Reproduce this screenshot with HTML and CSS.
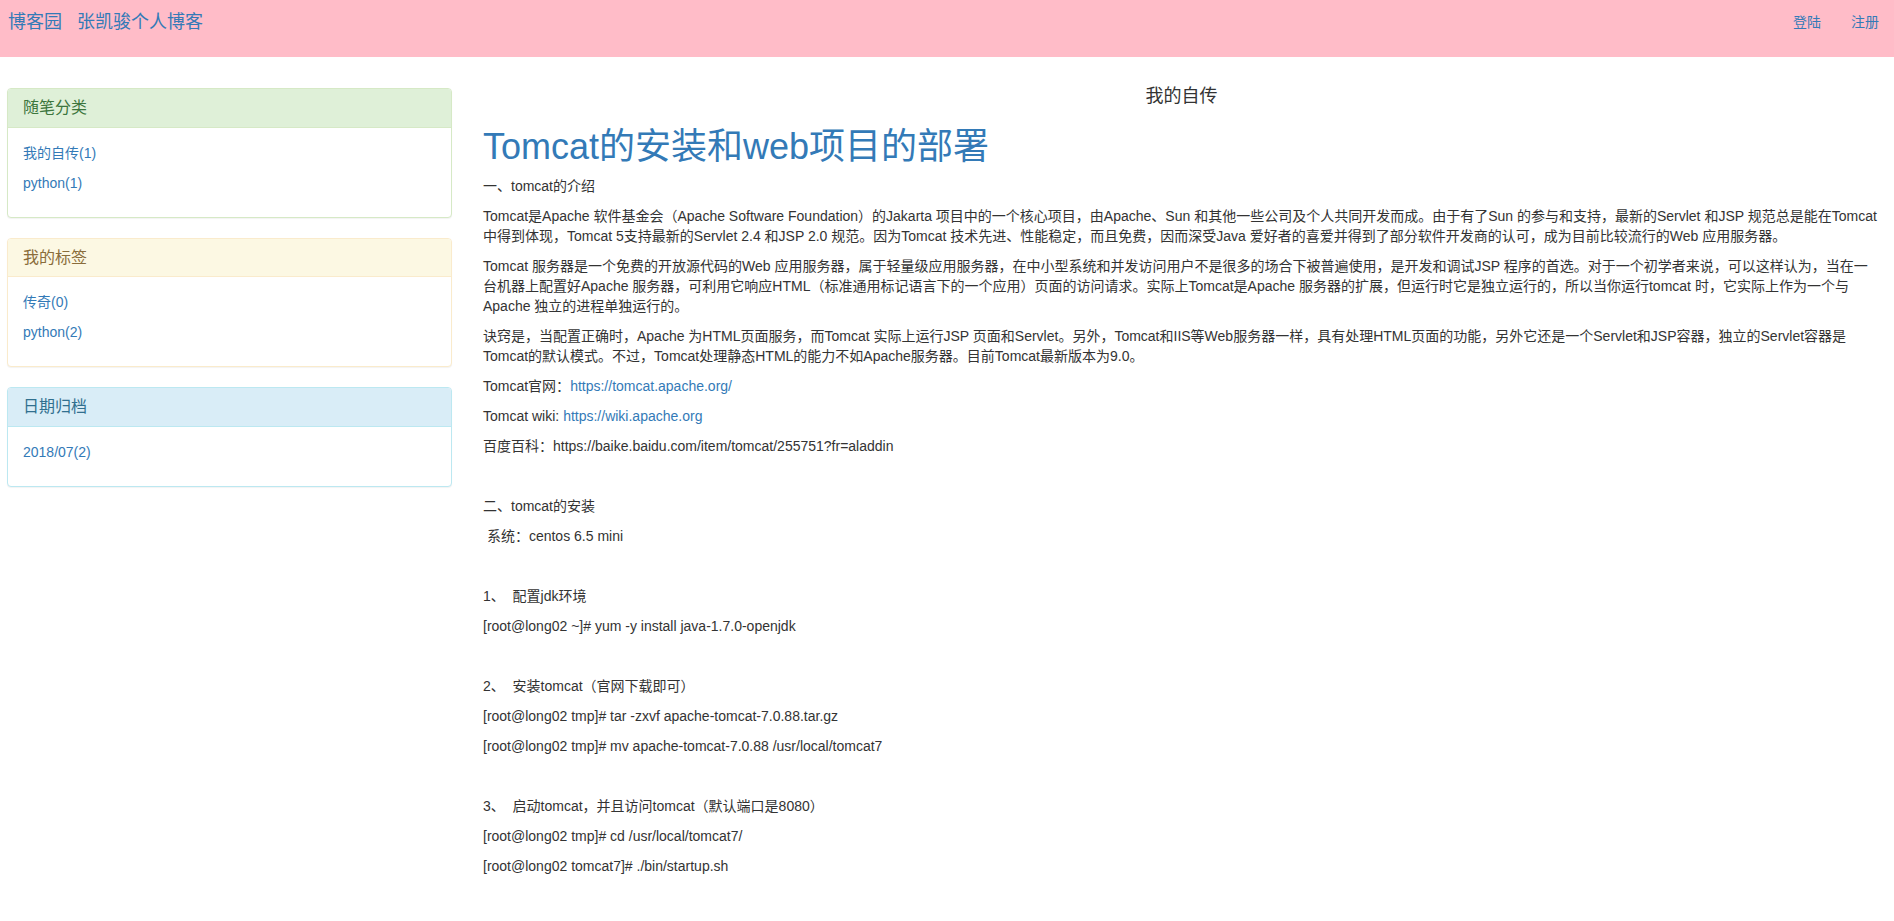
FILE: index.html
```html
<!DOCTYPE html>
<html lang="zh-CN">
<head>
<meta charset="utf-8">
<title>张凯骏个人博客</title>
<link rel="stylesheet" href="styles.css">
</head>
<body>
<nav class="navbar">
  <div class="brand-group">
    <a class="brand" href="#">博客园</a>
    <a class="brand" href="#">张凯骏个人博客</a>
  </div>
  <div class="nav-right">
    <a class="nav-link" href="#">登陆</a>
    <a class="nav-link" href="#">注册</a>
  </div>
</nav>
<div class="layout">
  <aside class="sidebar">
    <div class="panel panel-success">
      <div class="panel-heading">随笔分类</div>
      <div class="panel-body">
        <p><a href="#">我的自传(1)</a></p>
        <p><a href="#">python(1)</a></p>
      </div>
    </div>
    <div class="panel panel-warning">
      <div class="panel-heading">我的标签</div>
      <div class="panel-body">
        <p><a href="#">传奇(0)</a></p>
        <p><a href="#">python(2)</a></p>
      </div>
    </div>
    <div class="panel panel-info">
      <div class="panel-heading">日期归档</div>
      <div class="panel-body">
        <p><a href="#">2018/07(2)</a></p>
      </div>
    </div>
  </aside>
  <main class="content">
    <h4 class="category">我的自传</h4>
    <h1 class="post-title"><a href="#">Tomcat的安装和web项目的部署</a></h1>
    <div class="post-body">
      <p>一、tomcat的介绍</p>
      <p>Tomcat是Apache 软件基金会（Apache Software Foundation）的Jakarta 项目中的一个核心项目，由Apache、Sun 和其他一些公司及个人共同开发而成。由于有了Sun 的参与和支持，最新的Servlet 和JSP 规范总是能在Tomcat中得到体现，Tomcat 5支持最新的Servlet 2.4 和JSP 2.0 规范。因为Tomcat 技术先进、性能稳定，而且免费，因而深受Java 爱好者的喜爱并得到了部分软件开发商的认可，成为目前比较流行的Web 应用服务器。</p>
      <p>Tomcat 服务器是一个免费的开放源代码的Web 应用服务器，属于轻量级应用服务器，在中小型系统和并发访问用户不是很多的场合下被普遍使用，是开发和调试JSP 程序的首选。对于一个初学者来说，可以这样认为，当在一台机器上配置好Apache 服务器，可利用它响应HTML（标准通用标记语言下的一个应用）页面的访问请求。实际上Tomcat是Apache 服务器的扩展，但运行时它是独立运行的，所以当你运行tomcat 时，它实际上作为一个与Apache 独立的进程单独运行的。</p>
      <p>诀窍是，当配置正确时，Apache 为HTML页面服务，而Tomcat 实际上运行JSP 页面和Servlet。另外，Tomcat和IIS等Web服务器一样，具有处理HTML页面的功能，另外它还是一个Servlet和JSP容器，独立的Servlet容器是Tomcat的默认模式。不过，Tomcat处理静态HTML的能力不如Apache服务器。目前Tomcat最新版本为9.0。</p>
      <p>Tomcat官网：<a href="#">https://tomcat.apache.org/</a></p>
      <p>Tomcat wiki: <a href="#">https://wiki.apache.org</a></p>
      <p>百度百科：https://baike.baidu.com/item/tomcat/255751?fr=aladdin</p>
      <p>&nbsp;</p>
      <p>二、tomcat的安装</p>
      <p>&nbsp;系统：centos 6.5 mini</p>
      <p>&nbsp;</p>
      <p>1、&nbsp; 配置jdk环境</p>
      <p>[root@long02 ~]# yum -y install java-1.7.0-openjdk</p>
      <p>&nbsp;</p>
      <p>2、&nbsp; 安装tomcat（官网下载即可）</p>
      <p>[root@long02 tmp]# tar -zxvf apache-tomcat-7.0.88.tar.gz</p>
      <p>[root@long02 tmp]# mv apache-tomcat-7.0.88 /usr/local/tomcat7</p>
      <p>&nbsp;</p>
      <p>3、&nbsp; 启动tomcat，并且访问tomcat（默认端口是8080）</p>
      <p>[root@long02 tmp]# cd /usr/local/tomcat7/</p>
      <p>[root@long02 tomcat7]# ./bin/startup.sh</p>
    </div>
  </main>
</div>
</body>
</html>
```

FILE: styles.css
```css
* {
  box-sizing: border-box;
}

html, body {
  margin: 0;
  padding: 0;
}

body {
  font-family: "Liberation Sans", Arial, "Noto Sans CJK SC", sans-serif;
  font-size: 14px;
  line-height: 20px;
  color: #333333;
  background: #ffffff;
}

a {
  color: #337ab7;
  text-decoration: none;
}

p {
  margin: 0 0 10px;
}

/* Navbar */
.navbar {
  height: 57px;
  background: #ffbcc8;
  display: flex;
  justify-content: space-between;
  align-items: flex-start;
  padding-top: 12px;
}

.brand-group {
  display: flex;
  padding-left: 8px;
  gap: 15px;
}

.brand {
  font-size: 18px;
  line-height: 20px;
}

.nav-right {
  display: flex;
}

.nav-link {
  padding: 0 15px;
  font-size: 14px;
  line-height: 20px;
}

/* Layout */
.layout {
  display: flex;
  align-items: flex-start;
}

.sidebar {
  width: 445px;
  margin-left: 7px;
  padding-top: 31px;
  flex: none;
}

.content {
  flex: 1;
  margin-left: 31px;
  padding-right: 14px;
  padding-top: 30px;
}

/* Panels */
.panel {
  border: 1px solid transparent;
  border-radius: 4px;
  margin-bottom: 20px;
  background: #ffffff;
  box-shadow: 0 1px 1px rgba(0, 0, 0, 0.05);
}

.panel-heading {
  padding: 10px 15px;
  font-size: 16px;
  line-height: 17.6px;
  border-bottom: 1px solid transparent;
  border-radius: 3px 3px 0 0;
}

.panel-body {
  padding: 15px 15px 14px;
}

.panel-success {
  border-color: #d6e9c6;
}
.panel-success .panel-heading {
  background: #dff0d8;
  color: #3c763d;
  border-bottom-color: #d6e9c6;
}

.panel-warning {
  border-color: #faebcc;
}
.panel-warning .panel-heading {
  background: #fcf8e3;
  color: #8a6d3b;
  border-bottom-color: #faebcc;
}

.panel-info {
  border-color: #bce8f1;
}
.panel-info .panel-heading {
  background: #d9edf7;
  color: #31708f;
  border-bottom-color: #bce8f1;
}

/* Post */
.category {
  margin: 0;
  font-size: 18px;
  line-height: 19.8px;
  font-weight: normal;
  text-align: center;
  color: #333333;
}

.post-title {
  margin: 20px 0 10px;
  font-size: 36px;
  line-height: 39.6px;
  font-weight: normal;
}

.post-body p {
  margin: 0 0 10px;
}
```
